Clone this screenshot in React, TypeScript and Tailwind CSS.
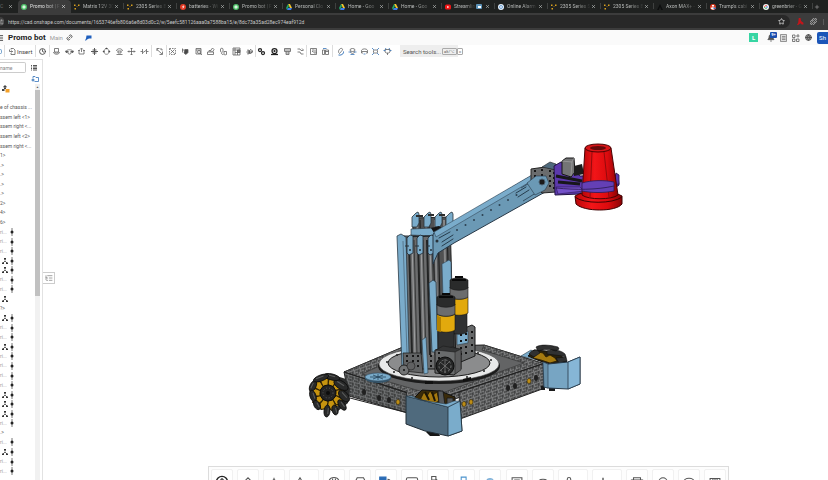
import React from 'react';
import {
  Star, Puzzle, Plus, X, Link2, Bell, Globe, Clock, Menu, ListTree, ChevronDown, SlidersHorizontal,
} from 'lucide-react';

type TabInfo = { title: string; kind: string; active?: boolean; muted?: boolean };

const tabs: TabInfo[] = [
  { title: 'Promo bot | F', kind: 'onshape', active: true },
  { title: 'Matrix 12V 30', kind: 'dots' },
  { title: '2305 Series B', kind: 'dots' },
  { title: 'batteries - Wi', kind: 'battery' },
  { title: 'Promo bot | F', kind: 'onshape' },
  { title: 'Personal Clo', kind: 'drive' },
  { title: 'Home - Goo', kind: 'drive' },
  { title: 'Home - Goo', kind: 'drive' },
  { title: 'Streamlin', kind: 'youtube', muted: true },
  { title: 'Online Alarm', kind: 'clock' },
  { title: '2305 Series S', kind: 'dots' },
  { title: '2305 Series B', kind: 'dots' },
  { title: 'Axon MAX+ -', kind: 'axon' },
  { title: "Trump's cabi", kind: 'ball' },
  { title: 'greenbrier - G', kind: 'google' },
];

const Favicon: React.FC<{ kind: string }> = ({ kind }) => (
  <svg viewBox="0 0 12 12" className="h-[6px] w-[6px] shrink-0">
    {kind === 'onshape' && (
      <>
        <circle cx="6" cy="6" r="6" fill="#4fc069" />
        <path d="M6 2.5 9 4.2v3.6L6 9.500 3 7.800V4.200z" fill="#d9f5df" />
      </>
    )}
    {kind === 'dots' && (
      <g fill="#d9a11e">
        <rect x="0" y="1" width="3" height="3" />
        <rect x="8" y="1" width="3" height="3" />
        <rect x="1" y="8" width="3" height="3" />
        <rect x="5" y="4" width="2" height="2" fill="#86631a" />
      </g>
    )}
    {kind === 'battery' && (
      <>
        <circle cx="6" cy="6" r="6" fill="#e23b26" />
        <path d="M7 2 4 6.500h2L5 10l4-5H7z" fill="#fff" />
      </>
    )}
    {kind === 'drive' && (
      <>
        <path d="M4 0h4l4 8H8z" fill="#f7c52c" />
        <path d="M4 0 0 8l2 4 4-8z" fill="#22a565" />
        <path d="M2 12h8l2-4H4z" fill="#3b7bea" />
      </>
    )}
    {kind === 'youtube' && (
      <>
        <rect y="1" width="12" height="10" rx="3" fill="#f31515" />
        <path d="M4.500 3.500v5l4-2.500z" fill="#fff" />
      </>
    )}
    {kind === 'clock' && (
      <>
        <circle cx="6" cy="6" r="6" fill="#e8f1fb" />
        <circle cx="6" cy="6" r="3" fill="none" stroke="#4a87c4" strokeWidth="1.500" />
      </>
    )}
    {kind === 'axon' && <path d="M6 0 12 12H8.500L6 6l-2.500 6H0z" fill="#0d0e0e" />}
    {kind === 'ball' && (
      <>
        <circle cx="6" cy="6" r="6" fill="#e23c22" />
        <path d="M1 8c3-3 7-1 10 0-2 4-7 5-10 0zM4 2h4v3H4z" fill="#fff" />
        <path d="M7 7h4v3H7z" fill="#3170c5" />
      </>
    )}
    {kind === 'google' && (
      <>
        <circle cx="6" cy="6" r="6" fill="#f4f4f4" />
        <path d="M3 6a3 3 0 0 1 5-2" stroke="#ea4335" strokeWidth="2" fill="none" />
        <path d="M3 6a3 3 0 0 0 5 2" stroke="#34a853" strokeWidth="2" fill="none" />
        <path d="M6 6h4" stroke="#4285f4" strokeWidth="2" />
      </>
    )}
  </svg>
);

const BrowserTabs: React.FC = () => (
  <div className="flex h-[13px] items-stretch bg-[#1f2120] text-[5px] text-[#b9bbba]">
    <div className="flex w-[18px] shrink-0 items-center justify-between pr-[5px]">
      <span className="text-[#6b6d6c]">C</span>
      <button aria-label="Close tab"><X className="h-[5px] w-[5px]" strokeWidth={3} /></button>
    </div>
    {tabs.map((tab, i) => (
      <div
        key={i}
        className={`relative flex w-[53px] shrink-0 items-center pr-[5px] pl-[3px] ${
          tab.active ? 'rounded-t-[4px] bg-[#3c3c3c] text-[#e0e0e0]' : ''
        }`}
      >
        <Favicon kind={tab.kind} />
        <span className="ml-[3px] flex-1 mask-r-from-50% whitespace-nowrap">{tab.title}</span>
        {tab.muted && (
          <span className="mr-[3px] flex h-[5px] w-[6px] items-center justify-center rounded-[1px] bg-[#5d93b8]">
            <span className="h-[2px] w-[3px] bg-white" />
          </span>
        )}
        <button aria-label="Close tab"><X className="h-[5px] w-[5px]" strokeWidth={3} /></button>
        {!tab.active && <span className="absolute top-[3px] right-0 h-[6px] w-px bg-[#3f4140]" />}
      </div>
    ))}
    <button aria-label="New tab" className="pl-[1px]"><Plus className="h-[6px] w-[6px]" /></button>
  </div>
);

const AddressBar: React.FC = () => (
  <div className="flex h-[17px] items-center bg-[#3c3c3c] py-[2px] text-[#c7c7c7]">
    <div className="flex h-full flex-1 items-center gap-[4px] rounded-r-full bg-[#282828] pr-[5px]">
      <span className="flex h-[9px] w-[4px] items-center justify-end overflow-hidden rounded-r-full bg-[#3f3f3f]">
        <SlidersHorizontal className="h-[6px] w-[6px] shrink-0" />
      </span>
      <input
        aria-label="Address"
        className="h-full flex-1 bg-transparent text-[5px] outline-none"
        defaultValue="https://cad.onshape.com/documents/1653746efb806a6e8d03d0c2/w/5eefc581126aaa0a7588ba15/e/8dc73a35ad28ec974eaf912d"
      />
      <button aria-label="Bookmark"><Star className="h-[7px] w-[7px]" strokeWidth={3} /></button>
    </div>
    <div className="flex items-center gap-[6px] pr-[4px] pl-[7px]">
      <button aria-label="PDF tools">
        <svg viewBox="0 0 12 12" className="h-[7px] w-[7px]">
          <path d="M3 0h3l1 5 4 3v3H8L6 9l-4 3H0l2-4z" fill="#c3151a" />
        </svg>
      </button>
      <button aria-label="Extensions"><Puzzle className="h-[7px] w-[7px]" strokeWidth={3} /></button>
      <span className="h-[6px] w-px bg-[#5c5c5c]" />
    </div>
  </div>
);

const DocumentHeader: React.FC = () => (
  <header className="flex h-[15px] items-center bg-[#fafafa] text-[#4b4b4b]">
    <button aria-label="Menu" className="w-[8px]"><Menu className="-ml-1 h-[8px] w-[8px]" strokeWidth={3} /></button>
    <h1 className="text-[8px] font-bold text-[#222]">Promo bot</h1>
    <span className="pl-[4px] text-[6px] text-[#9a9a9a]">Main</span>
    <button aria-label="Copy link" className="pl-[3px]"><Link2 className="h-[7px] w-[7px] -rotate-45" strokeWidth={3} /></button>
    <button aria-label="Learning" className="pl-[12px]">
      <svg viewBox="0 0 14 12" className="h-[6px] w-[7px]">
        <path d="M3 1h10v6H8L4 9 2 11H0l2-4z" fill="#1f5fbd" />
      </svg>
    </button>
    <div className="ml-auto flex items-center gap-[5px]">
      <span className="mr-[4px] flex h-[9px] w-[9px] items-center justify-center bg-[#37d5a3] text-[6px] font-bold text-white">L</span>
      <button aria-label="Notifications" className="relative">
        <Bell className="h-[8px] w-[8px]" fill="#555" />
        <span className="absolute -top-[2px] left-[3px] flex h-[6px] w-[7px] items-center justify-center rounded-[1px] bg-[#1b4fb0] text-[4px] leading-none font-bold text-white">
          9+
        </span>
      </button>
      <button aria-label="Release tasks">
        <svg viewBox="0 0 14 16" className="h-[8px] w-[7px]" fill="#ddd" stroke="#777" strokeWidth="1.500">
          <path d="M1 1h12v14H1zM4 5h7M4 8h7M4 11h7" />
        </svg>
      </button>
      <button aria-label="Apps">
        <svg viewBox="0 0 16 16" className="h-[8px] w-[8px]" fill="none" stroke="#555" strokeWidth="1.500">
          <path d="M1 2h5v5H1zM1 10h5v5H1zM9 10h5v5H9zM12 0v7M8 4h7" />
        </svg>
      </button>
      <button aria-label="Language"><Globe className="h-[7px] w-[7px]" fill="#aaa" strokeWidth={3} /></button>
      <button className="h-[12px] w-[11px] rounded-l-[2px] bg-[#1b55b8] text-center text-[6px] text-white">Sh</button>
    </div>
  </header>
);

const ToolIcon: React.FC<{ label: string; children: React.ReactNode }> = ({ label, children }) => (
  <button aria-label={label} className="h-[9px] w-[9px] shrink-0">
    <svg viewBox="-1 -1 18 18" className="h-full w-full" fill="none" stroke="#595959" strokeWidth="1.500">
      {children}
    </svg>
  </button>
);

const Toolbar: React.FC = () => (
  <div className="flex h-[12px] items-stretch text-[6px] text-[#444]">
    <div className="flex w-[5px] items-center border-r border-[#ddd]">
      <span className="h-[5px] w-[2px] rounded-r-full border border-l-0 border-[#7aa6cf]" />
    </div>
    <button className="flex w-[30px] items-center gap-[1px] pl-[4px]">
      <svg viewBox="0 0 14 14" className="h-[7px] w-[7px]" fill="none" stroke="#555" strokeWidth="1.500">
        <path d="M4 3V1h5l3 3v9H4v-3M1 3v4h6M5 5l2 2-2 2" />
      </svg>
      Insert
    </button>
    <div className="flex w-[14px] items-center justify-center border-l border-[#ddd]">
      <button aria-label="History"><Clock className="h-[7px] w-[7px]" strokeWidth={3} /></button>
    </div>
    <div className="flex w-[102px] items-center justify-between border-l border-[#ddd] px-[2px]">
      <ToolIcon label="Fastened mate"><path d="M4 2h8v7H4z" /><path d="M2 9c0 6 12 6 12 0M4 9c0 3 8 3 8 0" /></ToolIcon>
      <ToolIcon label="Revolute mate"><path d="M2 9C-1 3 17 3 14 9M5 7v4c0 3 6 3 6 0V7" /><path d="m0 7 2 4 3-3zM16 7l-2 4-3-3z" fill="#484848" /></ToolIcon>
      <ToolIcon label="Slider mate"><path d="M3 6v7h10V6M8 9V2M5 4l3-3 3 3M1 6h4M11 6h4" /></ToolIcon>
      <ToolIcon label="Planar mate"><path d="M1 8h14M8 1v14M4 5h8M4 11h8" strokeWidth="2" /></ToolIcon>
      <ToolIcon label="Cylindrical mate"><path d="M4 4c2-2 6-2 8 0M4 12c2 2 6 2 8 0M3 6v4M13 6v4" /><path d="m0 8 4-3v6zM16 8l-4-3v6zM8 0l3 3H5z" fill="#484848" stroke="none" /></ToolIcon>
      <ToolIcon label="Pin slot mate"><path d="M2 7c0-6 12-6 12 0M5 7v4h6V7M2 14h12M4 7h8" /></ToolIcon>
      <ToolIcon label="Ball mate"><path d="M8 1v14M1 8h14M6 3l2-2 2 2M6 13l2 2 2-2M3 6 1 8l2 2M13 6l2 2-2 2" /></ToolIcon>
      <ToolIcon label="Parallel mate"><path d="M4 3v10M12 3v10M5 10l6-4M0 8h4M12 8h4" /></ToolIcon>
    </div>
    <div className="flex w-[15px] items-center justify-center border-l border-[#ddd]">
      <ToolIcon label="Tangent mate"><path d="m2 3 11 10M3 7V2h5M8 14h6V8M9 3h4v3" /></ToolIcon>
    </div>
    <div className="flex w-[89px] items-center justify-between border-l border-[#ddd] px-[1px]">
      <ToolIcon label="Group"><path d="M2 2h12v12H2z" strokeDasharray="3 2" /><path d="m4 4 8 8M12 4l-8 8" /></ToolIcon>
      <ToolIcon label="Mate connector"><path d="M7 4h6v6l-4 4-4-3z" fill="#484848" /><path d="M2 2v8M1 5h6" /></ToolIcon>
      <ToolIcon label="Replicate"><path d="M3 2h10v11H3zM3 5h10" /><circle cx="9" cy="9" r="3" /><path d="m11 11 4 4" /></ToolIcon>
      <ToolIcon label="Snap"><path d="M2 9h12v5H2zM5 9V6h4v3M9 5l3-4 3 3-3 5" /></ToolIcon>
      <ToolIcon label="Pattern"><path d="M2 8V3c0-2 5-2 5 0v5c0 2-5 2-5 0zM9 13V8h5v6c-2 1-5 1-5-1zM4 11c0 3 2 3 4 3" /></ToolIcon>
      <ToolIcon label="Bill of materials"><path d="M1 1h14v14H1zM1 5h14M5 1v14M5 10h10M10 5v10" /><path d="M10 5h5v5h-5z" fill="#777" /></ToolIcon>
      <ToolIcon label="Gear relation"><path d="M5 4v3h3v4H5v3M2 9h12M8 6l3-2 3 3-2 4-4 1z" strokeWidth="2" /></ToolIcon>
    </div>
    <div className="flex w-[51px] items-center justify-between border-l border-[#ddd] px-[1px]">
      <ToolIcon label="Relation"><g stroke="#222" strokeWidth="2.500"><circle cx="5" cy="5" r="3" /><circle cx="11" cy="11" r="3" /></g></ToolIcon>
      <ToolIcon label="Rack and pinion"><g stroke="#222" strokeWidth="2.500"><circle cx="8" cy="7" r="5" /><circle cx="8" cy="7" r="1" /><path d="M1 14h14" /></g></ToolIcon>
      <ToolIcon label="Screw relation"><path d="M2 2h12v6H2zM2 5h12M5 8v6h6V8M5 11h6" /></ToolIcon>
      <ToolIcon label="Linear relation"><path d="M2 3h5l2 3h5M2 9h5l2 4h5M11 2l3 3" /></ToolIcon>
    </div>
    <div className="flex w-[26px] items-center justify-between border-l border-[#ddd] px-[2px]">
      <ToolIcon label="Exploded view"><path d="M2 2h12v12H2zM5 5h4M5 8h3" /><path d="M11 4v6M8 9l3 3 3-3" /></ToolIcon>
      <ToolIcon label="Configurations"><path d="M2 5h4v9H2zM8 5h6v9H8zM8 8h6" /><path d="M3 2h7" stroke="#2b6cb5" /></ToolIcon>
    </div>
    <div className="flex w-[63px] items-center justify-between border-l border-[#ddd] px-[3px]">
      <ToolIcon label="Animate"><path d="M6 12c-5-4 1-12 5-10 3 2-1 5-3 8z" /><path d="M4 15c5 1 11-2 10-7" stroke="#2b6cb5" strokeWidth="2" /></ToolIcon>
      <ToolIcon label="Show mates"><ellipse cx="8" cy="5" rx="5" ry="3" /><path d="M4 8c0 5 8 5 8 0" /><path d="M0 9h5M11 9h5M4 14h8" stroke="#2b6cb5" /></ToolIcon>
      <ToolIcon label="Section"><path d="M2 8C0 1 16 1 14 8zM2 8v3h3M14 8v3h-3" /><path d="M6 13h4" stroke="#2b6cb5" /></ToolIcon>
      <ToolIcon label="Fit parts"><rect x="4" y="5" width="8" height="6" rx="2" /><path d="m1 1 4 4M15 1l-4 4M1 15l4-4M15 15l-4-4" stroke="#2b6cb5" /></ToolIcon>
      <ToolIcon label="Interference"><path d="M3 4h10v5l-3 2H6L3 9zM8 11v4" /><path d="M0 6h4M12 6h4M4 1l1 3M12 1l-1 3" stroke="#2b6cb5" /></ToolIcon>
    </div>
    <button className="ml-[5px] flex w-[58px] items-center bg-[#eeeeee] pl-[3px] whitespace-nowrap text-[#555]">
      Search tools...
      <kbd className="ml-[1px] rounded-[1px] border border-[#aaa] px-px font-[Roboto,sans-serif] text-[4px] leading-[5px]">alt/⌥</kbd>
      <kbd className="rounded-[1px] border border-[#aaa] px-px font-[Roboto,sans-serif] text-[4px] leading-[5px]">c</kbd>
    </button>
  </div>
);

// "m" is a row with the mate glyph, "r" a truncated revolute row, anything else is plain text
const treeRows = [
  'e of chassis ...', 'ssem left <1>', 'ssem right <...', 'ssem left <2>', 'ssem right <...',
  '1>', '.>', '.>', '.>', '.>', '2>', '4>', '6>',
  'r', 'r', 'r', 'm', 'm', 'r', 'r', 'm-', '?>', 'm', 'r', 'r', 'm', 'r', 'r', 'r', 'r',
  'm', 'm', 'm', 'r', '.>', 'r', 'm', 'r', 'r',
];

const TreeRow: React.FC<{ row: string }> = ({ row }) => {
  const mate = row[0] === 'm';
  const rev = row === 'r';
  return (
    <li className="flex min-h-0 flex-1 items-center">
      {!mate && !rev && <span className="leading-none whitespace-nowrap">{row}</span>}
      {rev && <span className="w-[8px] leading-none text-[#999]">ri...</span>}
      {mate && (
        <svg viewBox="0 0 12 12" className="ml-[2px] h-[6px] w-[6px]">
          <path d="M6 5v-4M6 6l-4 4M6 6l4 4" stroke="#333" strokeWidth="1.500" />
          <path d="M4 0h4v3H4zM0 9h4v3H0zM8 9h4v3H8z" fill="#333" />
        </svg>
      )}
      {(rev || row === 'm') && (
        <svg viewBox="0 0 8 16" className="ml-[2px] h-[8px] w-[4px]">
          <path d="M4 0v16" stroke="#777" strokeWidth="2" />
          <circle cx="4" cy="8" r="3" fill="#222" />
        </svg>
      )}
    </li>
  );
};

const FeaturePanel: React.FC = () => (
  <aside className="mt-[2px] flex w-[43px] shrink-0 flex-col border-t border-r border-[#e2e2e2] text-[#555]">
    <div className="flex items-center pt-[2px]">
      <input
        aria-label="Filter by name"
        placeholder="name"
        className="h-[11px] w-[26px] rounded-r-[2px] border border-l-0 border-[#ccc] text-[5px] outline-none placeholder:text-[#888]"
      />
      <button aria-label="List options" className="ml-[5px]">
        <svg viewBox="0 0 12 12" className="h-[6px] w-[6px]" stroke="#555" strokeWidth="2">
          <path d="M0 1h2M4 1h8M0 4h2M4 4h8M0 7h2M4 7h8M0 10h2M4 10h8" />
        </svg>
      </button>
    </div>
    <button aria-label="New folder" className="mr-[3px] self-end pt-[3px]">
      <svg viewBox="0 0 16 12" className="h-[6px] w-[8px]" fill="none" stroke="#2b6cb5" strokeWidth="1.500">
        <path d="M4 4V1h4l2 2h5v8H7" />
        <path d="M4 5v6M1 8h6" strokeWidth="2" />
      </svg>
    </button>
    <div className="mt-[2px] flex min-h-0 flex-1">
      <div className="flex w-[35px] flex-col">
        <svg viewBox="0 0 16 16" className="mt-px ml-[2px] h-[8px] w-[8px] shrink-0">
          <path d="M6 0v7M6 6l-4 4M6 6l4 4" stroke="#444" strokeWidth="2" />
          <path d="M3 2h6v3H3zM0 8h5v4H0z" fill="#444" />
          <path d="M7 8h8v7H7z" fill="#f3a028" />
        </svg>
        <ul className="mt-[10px] mb-1 flex min-h-0 flex-1 flex-col text-[5px]">
          {treeRows.map((row, i) => (
            <TreeRow key={i} row={row} />
          ))}
        </ul>
      </div>
      <div className="flex w-[5px] flex-col bg-[#f1f1f1]">
        <span className="py-[2px] text-center text-[3px] leading-[2px]">▲</span>
        <span className="h-[52%] bg-[#c1c1c1]" />
      </div>
    </div>
  </aside>
);

const blue = '#7aaccb';
const blueDark = '#4f6a7d';

// rollers of the mecanum wheel: x, y, half length, half width, angle
const rollers = [
  [-15, -7, 6, 3, -65], [-15, 3, 6, 3, 72], [-11, 12, 5, 3, 62], [-1, 18, 6, 3, 96], [7, 17, 5, 3, 75],
  [14, 12, 6, 3, 55], [16, 3, 7, 4, 48], [13, -8, 8, 4, 32], [4, -16, 8, 3, 14], [-7, -15, 8, 3, -20],
];

const LeftWheel: React.FC = () => (
  <g transform="translate(328 393)">
    <path d="M2-19 18-14 22-4 20 10 10 18z" fill="#2b2c2c" />
    <ellipse rx="15" ry="17" fill="#8f6c12" />
    {[20, 56, 92, 128, 164, 200, 236, 272, 308, 344].map((a) => (
      <path key={a} d="M-3-8-4-15 1-18 4-13 2-7z" fill="#c7940f" stroke="#2b1f04" transform={`rotate(${a})`} />
    ))}
    {rollers.map(([x, y, rx, ry, a]) => (
      <g key={a} transform={`translate(${x} ${y}) rotate(${a})`}>
        <ellipse rx={rx} ry={ry} fill="#292a2a" stroke="#0b0b0b" strokeWidth="0.8" />
        <path d={`M${3 - rx} -1h${rx}`} stroke="#5b5c5c" />
      </g>
    ))}
    <circle r="8" fill="#232323" stroke="#0f0f0f" />
    <circle r="5" fill="none" stroke="#5a5a5a" strokeDasharray="1 2" />
    <circle r="2" fill="#0c0c0c" />
  </g>
);

const Motor: React.FC<{ x: number; y: number }> = ({ x, y }) => (
  <g transform={`translate(${x} ${y})`} stroke="#161616" strokeWidth="0.6">
    <path d="M1 34h16v20c-4 3-12 3-16 0z" fill="#303132" />
    <path d="M0 19c4 3 14 3 18 0v16c-4 3-14 3-18 0z" fill="#e2a90d" />
    <path d="M0 20c1 1 3 2 4 2v15l-4-1z" fill="#b38100" stroke="none" />
    <path d="M0 9c4 3 14 3 18 0v10c-4 3-14 3-18 0z" fill="#6b6c6d" />
    <path d="M0 2c4-3 14-3 18 0v8c-4 3-14 3-18 0z" fill="#2a2b2b" />
    <path d="M2 2h14M5-1h8" stroke="#090909" strokeWidth="2" />
  </g>
);

const Robot: React.FC = () => (
  <svg viewBox="300 135 330 305" className="absolute top-[78px] left-[257px] h-[305px] w-[330px]" strokeLinejoin="round">
    <defs>
      <pattern id="holes" width="6" height="6" patternUnits="userSpaceOnUse" patternTransform="skewY(-18)">
        <rect width="6" height="6" fill="#7b7c7d" />
        <path d="M1 1h3M0 4h1M3 4h2M5 0v3M2 3v2" stroke="#222323" strokeWidth="1" />
      </pattern>
      <pattern id="holesLeft" width="6" height="6" patternUnits="userSpaceOnUse" patternTransform="skewY(15)">
        <rect width="6" height="6" fill="#6d6f70" />
        <path d="M1 1h3M0 4h1M3 4h2M5 0v3M2 3v2" stroke="#222323" strokeWidth="1" />
      </pattern>
      <linearGradient id="cone" x1="0" x2="1">
        <stop offset="0" stopColor="#b80608" />
        <stop offset="0.35" stopColor="#f21518" />
        <stop offset="0.7" stopColor="#dd0b0e" />
        <stop offset="1" stopColor="#8a0406" />
      </linearGradient>
    </defs>

    {/* chassis */}
    <path d="M344 372 403 347 484 345 545 364 447 402 406 400z" fill="#636465" stroke="#1a1a1a" />
    <path d="M344 372 403 347 410 352 362 374 430 394 445 392 524 363 482 350 484 345 545 364 455 399 406 400z" fill="url(#holes)" stroke="#2b2b2b" strokeWidth="0.6" />
    <path d="M344 372 406 392 408 413 349 396z" fill="url(#holesLeft)" stroke="#242424" />
    <path d="M459 392 545 363 545 388 460 419z" fill="url(#holes)" stroke="#242424" />
    <path d="M344 372 407 393M441 398 545 363M350 398 408 413" stroke="#222" fill="none" />
    {[[379, 398], [389, 400], [364, 392], [508, 388], [515, 386], [536, 378]].map(([x, y]) => (
      <ellipse key={x} cx={x} cy={y} rx="2" ry="3" fill="#202020" />
    ))}
    {[[398, 402], [464, 404], [471, 402], [529, 381]].map(([x, y]) => (
      <ellipse key={x} cx={x} cy={y} rx="2" ry="2.500" fill="#bd8d16" stroke="#3b2b05" strokeWidth="0.6" />
    ))}

    {/* turntable */}
    <ellipse cx="439" cy="366" rx="61" ry="18" fill="#1c1c1c" />
    <ellipse cx="439" cy="364" rx="60" ry="17" fill="#e8e9e9" stroke="#444" strokeWidth="0.6" />
    <ellipse cx="439" cy="363" rx="51" ry="14" fill="#8b8c8d" stroke="#1b1b1b" />
    {[[387, 362], [394, 372], [412, 378], [467, 377], [484, 371], [491, 360], [478, 353], [397, 355]].map(([x, y]) => (
      <circle key={x} cx={x} cy={y} r="1" fill="#222" />
    ))}
    <path d="M425 381h8v3h-8zM463 379l8-2v3l-8 2z" fill="#111" />
    <ellipse cx="378" cy="378" rx="13" ry="5" fill="#35566c" />
    <ellipse cx="378" cy="377" rx="13" ry="4" fill={blue} stroke="#33485a" strokeWidth="0.6" />
    <path d="M370 377h16M378 374v6M373 375l10 4M383 375l-10 4" stroke="#27445a" strokeWidth="0.8" />

    <LeftWheel />

    {/* rear tower */}
    <path d="M413 218 450 217 453 330 464 352 412 352z" fill="#505152" stroke="#222" />
    {[417, 426, 435, 444].map((x) => (
      <g key={x}>
        <path d={`M${x} 220l3 127`} stroke="#868788" strokeWidth="2" />
        <path d={`M${x + 3} 220l3 127`} stroke="#1a1b1b" />
      </g>
    ))}
    {[412, 424, 435, 446].map((x) => (
      <path key={x} d={`M${x} 217l4-4 2-1 1 2v9l-2 4h-5z`} fill={blue} stroke="#28323a" strokeWidth="0.8" />
    ))}
    <path d="M416 216h7M428 215h6M439 215h6" stroke="#2c2d2e" strokeWidth="2" />
    <path d="M411 229 433 228 437 232 433 236 411 235z" fill={blue} stroke="#28323a" strokeWidth="0.6" />
    <path d="M431 228 439 226 445 230 436 236z" fill="#151515" />
    <path d="M442 264 449 260 451 262 452 330 444 330z" fill={blue} stroke="#33485a" strokeWidth="0.6" />

    {/* front tower */}
    <path d="M403 237 433 236 436 350 438 369 405 369z" fill="#6b6c6d" stroke="#171717" />
    {[409, 418, 427].map((x) => (
      <g key={x}>
        <path d={`M${x} 240l3 115`} stroke="#232424" strokeWidth="2" />
        <path d={`M${x + 3} 240l3 115`} stroke="#9d9e9f" strokeWidth="1" />
        <path d={`M${x + 5} 240l3 115`} stroke="#3a3b3b" strokeWidth="1" />
      </g>
    ))}
    <path d="M397 236 401 234 406 237 409 352 410 369 402 367z" fill={blue} stroke="#2b3a45" strokeWidth="0.8" />
    <path d="M403 241 407 353" stroke={blueDark} strokeWidth="0.8" />
    {[407, 417, 428].map((x) => (
      <g key={x}>
        <path d={`M${x} 238l3-3 3 1v17l-4 2-2-2z`} fill={blue} stroke="#1e2a33" strokeWidth="0.8" />
        <path d={`M${x - 3} 236h5M${x - 2} 246h4`} stroke="#29323a" strokeWidth="1" />
        <circle cx={x + 3} cy="250" r="1" fill="#26343f" />
      </g>
    ))}
    <path d="M429 283 433 280 436 282 438 352 432 352z" fill={blue} stroke="#2b3a45" strokeWidth="0.8" />
    <path d="M422 340 426 337 428 373 424 374z" fill={blue} stroke="#2b3a45" strokeWidth="0.6" />

    {/* arm */}
    <path d="M433 234 536 173 548 172 551 184 545 192 454 243 438 253 433 264z" fill="#6b99b5" stroke="#263746" />
    <path d="M434 232 537 172 546 170 540 176 436 237z" fill={blue} stroke="#36495a" strokeWidth="0.6" />
    {Array.from({ length: 8 }, (_, i) => (
      <circle key={i} cx={457 + i * 8.500} cy={230 - i * 5} r="1" fill="#2c4151" />
    ))}
    <path d="M439 238 450 232M442 242 453 235M442 246 453 239M518 197 529 190M516 193 526 187" stroke="#263d4e" strokeWidth="1" strokeLinecap="round" />
    <path d="M521 188 536 179M523 201 539 191" stroke="#375266" strokeWidth="1" />
    <circle cx="437" cy="241" r="1.500" fill="#27313a" />

    {/* gearboxes and motors */}
    <path d="M455 332 472 325 475 327 475 356 456 364z" fill="#67696a" stroke="#1b1b1b" />
    <path d="M457 332 468 331 468 343 457 345z" fill={blue} stroke="#2b3a45" strokeWidth="0.6" />
    {[335, 341, 348, 354].map((y) => (
      <path key={y} d={`M460 ${y}h2M465 ${y - 1}h2M471 ${y - 3}h2`} stroke="#111" strokeWidth="2" />
    ))}
    <Motor x={450} y={278} />
    <Motor x={437} y={295} />
    <path d="M435 350 453 347 461 351 461 369 454 375 435 373z" fill="#696b6c" stroke="#1b1b1b" />
    <path d="M436 350 443 346 461 349 455 352z" fill="#343536" stroke="#1b1b1b" strokeWidth="0.6" />
    <path d="M455 352 461 349 461 370 455 374z" fill="#5a5b5c" stroke="#222" strokeWidth="0.6" />
    <path d="M403 353 421 353 423 373 404 371z" fill="#626465" stroke="#222" strokeWidth="0.8" />
    {[356, 361, 366].map((y) => (
      <path key={y} d={`M406 ${y}h2M412 ${y}h2M417 ${y}h2M430 ${y}h2M438 ${y - 3}h2`} stroke="#161616" strokeWidth="2" />
    ))}
    <circle cx="404" cy="370" r="5" fill="#717374" stroke="#222" />
    <circle cx="411" cy="366" r="4" fill="#606162" stroke="#222" strokeWidth="0.6" />
    <circle cx="404" cy="370" r="1" fill="#111" />
    <circle cx="445" cy="366" r="9" fill="#242525" stroke="#0c0c0c" />
    <circle cx="445" cy="366" r="6" fill="none" stroke="#757677" strokeDasharray="2 2" />
    <path d="m440 362 10 8M450 361l-10 10M445 359v14" stroke="#777" strokeWidth="0.8" />

    {/* front wheel and guard */}
    <path d="M415 397 422 390 440 391 455 397 455 405 418 404z" fill="#3a2b0a" stroke="#111" />
    <path d="M421 398l3-6 3 4 3-5 3 4 4-3 2 9-6 3-13-2z" fill="#a5790f" stroke="#241b04" strokeWidth="0.8" />
    <path d="M425 392l4 8M432 392l3 9" stroke="#1c1606" strokeWidth="2" />
    <path d="M438 391h5l2 14h-6zM447 398h6v7h-6z" fill="#55585a" stroke="#161616" strokeWidth="0.8" />
    <path d="M426 432h12l2 4h-10z" fill="#161616" />
    <path d="M406 396 418 399 448 407 460 401 462 431 448 436 425 431 406 424z" fill={blueDark} stroke="#202c35" />
    <path d="M448 407 460 401 462 431 448 436z" fill={blue} stroke="#202c35" strokeWidth="0.8" />
    <path d="M406 396 412 396 420 400 446 404 454 401 460 401 448 407z" fill={blue} stroke="#2c3e4c" strokeWidth="0.6" />

    {/* right wheel and guard */}
    <path d="M521 356 531 350 537 354 545 362z" fill={blue} stroke="#2b3a45" strokeWidth="0.6" />
    <path d="M528 356 534 350 558 352 567 362 550 364 540 361z" fill="#2a220c" stroke="#111" />
    <path d="M538 352l5 1 3 4 4-2 5 3 2 3-7 2-9-3-8-2z" fill="#a57a10" stroke="#241b04" strokeWidth="0.8" />
    <path d="M529 354c2-4 6-4 9-4l2 3-6 4zM536 347c5-3 14-2 22 0l1 2-3 2c-7-2-11-2-18 0zM547 351c6-2 14-1 18 3l1 3c-7-2-14-2-19-3zM556 358l10-1 1 4-8 2z" fill="#303131" stroke="#0e0e0e" strokeWidth="0.6" />
    <path d="M541 386h4v4h-4zM549 388h6v3h-6z" fill="#1b1b1b" />
    <path d="M543 362 548 364 568 362 580 357 580 384 568 389 548 388 544 387z" fill="#77a5c3" stroke="#263746" />
    <path d="M568 362 580 357 580 384 568 389z" fill="#86b6d6" stroke="#263746" strokeWidth="0.8" />
    <path d="M543 362 548 364 548 388 544 387z" fill="#6790aa" stroke="#263746" strokeWidth="0.6" />

    {/* gripper */}
    <path d="M531 169 545 167 556 170 556 192 542 193 531 181z" fill="#6a6c6d" stroke="#242424" />
    {[171, 176, 181, 186].map((y) => (
      <path key={y} d={`M534 ${y}h2M549 ${y}h2M553 ${y + 2}h2M541 ${y - 1}h2`} stroke="#161616" strokeWidth="2" />
    ))}
    <path d="M527 183 536 176 546 176 549 183 545 190 535 195z" fill="#6b99b5" stroke="#263746" strokeWidth="0.6" />
    <circle cx="542" cy="182" r="3" fill="#1a1a1a" stroke="#4b6172" />
    <path d="M542 167 550 162 556 164 556 170z" fill={blueDark} stroke="#222" strokeWidth="0.6" />
    <path d="M554 166 561 162 567 165 580 176 618 175 619 185 612 190 584 189 580 194 555 195z" fill="#5c39ad" stroke="#231442" />
    <path d="M556 187h24l4 4-26 3z" fill="#7451c9" stroke="#2b1a52" strokeWidth="0.6" />
    <path d="M556 176 582 181M558 182 580 184" stroke="#18171b" strokeWidth="3" />
    <path d="M562 161 566 158 574 158 575 172 571 177 562 174z" fill="#747576" stroke="#171717" />
    <path d="M562 161 572 162 574 158M572 162l-1 14" fill="none" stroke="#aaa" strokeWidth="0.6" />
    <path d="M574 166 582 164 584 174 574 176z" fill="#1c1c1c" />
    <path d="M616 173 619 175 619 184 613 185z" fill="#5c39ad" stroke="#231442" strokeWidth="0.8" />

    {/* beacon */}
    <path d="M575 196c8-6 38-6 47 0v8c-6 8-38 8-46 0z" fill="url(#cone)" stroke="#3d0203" />
    <path d="M575 197c8 7 38 7 47 0" fill="none" stroke="#3d0203" strokeWidth="1" />
    <path d="M585 148 611 148 618 195c-6 5-30 5-36 0z" fill="url(#cone)" stroke="#4a0304" />
    <path d="M592 152 590 197M604 152 609 197" stroke="#82090b" strokeWidth="0.8" />
    <ellipse cx="598" cy="148" rx="13" ry="4" fill="#d81518" stroke="#4a0304" />
    <ellipse cx="598" cy="148" rx="8" ry="2" fill="#65080a" />
    <path d="M582 183c10-3 22-3 32-1v9c-10 2-22 2-32 0z" fill="#6440b5" stroke="#2b1a52" strokeWidth="0.8" />
    <path d="M556 188c20 2 40 2 58-2" stroke="#2b1a52" strokeWidth="0.8" fill="none" />
  </svg>
);

const dockIcons: { name: string; chevron?: boolean; art: React.ReactNode }[] = [
  { name: 'Home', art: <><circle cx="10" cy="10" r="8" stroke="#222" strokeWidth="2" /><path d="m4 11 6-6 6 6v4H4z" fill="#222" /></> },
  { name: 'Rotate', art: <path d="M5 9 10 4l5 5M7 8v6M13 8v6M3 12h5" /> },
  { name: 'Move', art: <path d="M10 4v14M7 9l3-3 3 3M3 10v6M17 10v6" /> },
  { name: 'Triad', chevron: true, art: <path d="m10 4 3 5 5 2-4 3H6l-4-3 5-2z" /> },
  { name: 'Globe', art: <><path d="M3 13V8c2-6 12-6 14 0v5z" /><path d="M3 9h14M8 5v8M12 5v8" /></> },
  { name: 'Stack', art: <path d="M4 8l2-4h9l2 4M2 8h16v6H2zM5 11h10" /> },
  { name: 'Transform', art: <><path d="M1 3h9v9H1z" fill="#2b6cb5" stroke="#2b6cb5" /><path d="M12 6c4 0 5 3 5 7M14 11l3 3 2-3" /></> },
  { name: 'Display', art: <><rect x="2" y="4" width="16" height="11" rx="2" /><path d="M6 8h8v4H6z" fill="#555" /></> },
  { name: 'Relations', art: <><path d="M1 2h6v5H1zM13 9h5v5h-5z" /><path d="M7 6l6 5" /><path d="M5 10h6" stroke="#2b6cb5" /></> },
  { name: 'Part', art: <path d="M6 3h7v14H6z" stroke="#4b93cd" /> },
  { name: 'Shaded', art: <><circle cx="10" cy="10" r="5" fill="#9ac5e4" stroke="#7fb0d8" /><path d="M6 7h5v7H6z" fill="#2664a9" stroke="none" /></> },
  { name: 'Notes', art: <path d="M3 4h14v14H3zM6 7h8M6 10h8M6 13h4" /> },
  { name: 'Comment', art: <path d="M3 12c0-8 14-8 14 0M5 13h10" /> },
  { name: 'Mass', chevron: true, art: <><circle cx="10" cy="6" r="2.500" /><path d="M7 9v6h6V9M10 9v4" /></> },
  { name: 'Axis', chevron: true, art: <path d="M10 4v14M5 12l5 2 5-2" strokeWidth="2" /> },
  { name: 'Print', art: <><path d="M2 7h16v8H2z" fill="#333" /><path d="M5 7V4h10v3" /></> },
  { name: 'Sensor', art: <><circle cx="10" cy="10" r="6" /><circle cx="10" cy="10" r="2" /></> },
  { name: 'Orbit', art: <><path d="M2 12c0-10 16-10 16 0" /><path d="M6 13c0-6 8-6 8 0" /></> },
  { name: 'Measure', art: <path d="M3 5h14v9H3zM7 5v9M13 5v9M10 5v5" /> },
];

const ViewDock: React.FC = () => (
  <div className="absolute -bottom-[18px] left-[165px] flex w-[521px] items-start justify-between border border-[#dcdcdc] bg-[#fdfdfd] px-[2px] py-[2px]">
    {dockIcons.map((icon) => (
      <button
        key={icon.name}
        aria-label={icon.name}
        className={`flex h-[26px] items-center justify-center rounded-[2px] border border-[#f1f1f1] bg-white text-[#444] ${
          icon.chevron ? 'w-[30px] gap-[3px]' : 'w-[22px]'
        }`}
      >
        <svg viewBox="0 0 20 20" className="h-[14px] w-[14px]" fill="none" stroke="#555" strokeWidth="1.500">
          {icon.art}
        </svg>
        {icon.chevron && <ChevronDown className="h-[5px] w-[5px]" strokeWidth={3} />}
      </button>
    ))}
  </div>
);

const App: React.FC = () => {
  return (
    <div className="flex h-screen flex-col overflow-hidden bg-white font-[Roboto,sans-serif]">
      <BrowserTabs />
      <AddressBar />
      <DocumentHeader />
      <Toolbar />
      <div className="flex min-h-0 flex-1">
        <FeaturePanel />
        <main className="relative flex-1 overflow-hidden">
          <button
            aria-label="Show feature list"
            className="absolute top-[215px] left-0 flex h-[12px] w-[12px] items-center justify-center border border-l-0 border-[#ccc] text-[#777]"
          >
            <ListTree className="h-[8px] w-[8px]" />
          </button>
          <Robot />
          <ViewDock />
        </main>
      </div>
    </div>
  );
};

export default App;
